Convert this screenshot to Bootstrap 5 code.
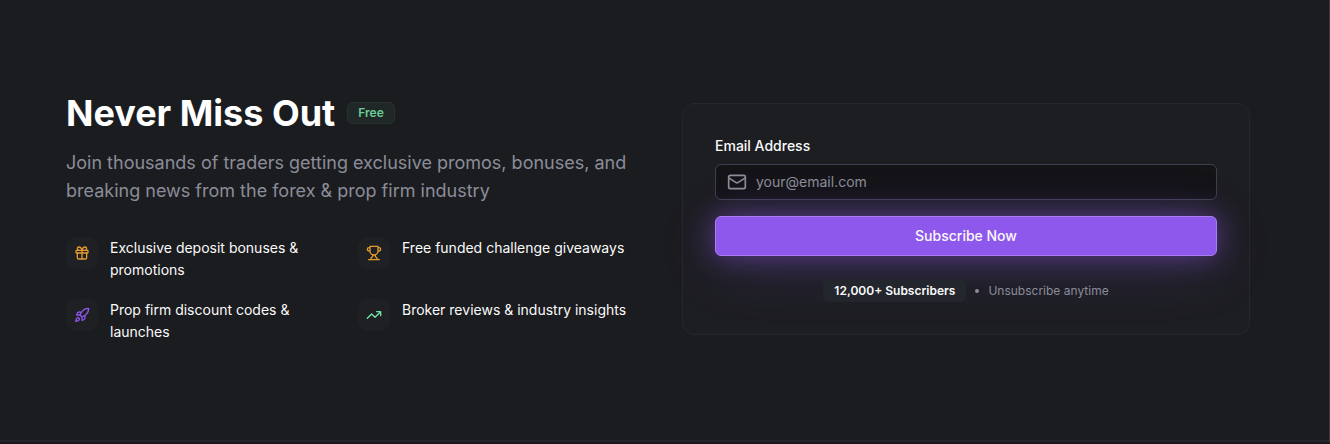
<!DOCTYPE html>
<html lang="en" data-bs-theme="dark">
<head>
<meta charset="utf-8">
<meta name="viewport" content="width=device-width, initial-scale=1">
<title>Never Miss Out</title>
<link href="https://cdn.jsdelivr.net/npm/bootstrap@5.3.0/dist/css/bootstrap.min.css" rel="stylesheet">
<style>
  body { background: #18181b; color: #fafafa; font-family: Inter, "Liberation Sans", sans-serif; font-size: 14px; line-height: 22px; border-right: 1px solid #3a3a3e; }
  .signup { background: #1b1c1f; padding: 93px 13px 95px 0; border-bottom: 2px solid #25262d; }
  .signup-inner { max-width: 1184px; }
  .signup-grid { display: grid; grid-template-columns: 1fr; gap: 48px; }
  .signup-title { font-size: 36px; line-height: 40px; font-weight: 700; }
  .signup-lead { font-size: 18px; line-height: 28px; color: #8b8c99; margin-bottom: 32px; }
  .pill { display: inline-block; font-size: 12px; line-height: 16px; padding: 2px 10px; border: 1px solid transparent; border-radius: 6px; }
  .pill-free { color: #6bcb94; background: #202827; border-color: #27322f; font-weight: 600; }
  .pill-count { color: #fafafa; background: #23262c; font-weight: 600; }
  .feature-grid { display: grid; grid-template-columns: 1fr 1fr; gap: 16px; }
  .feature-grid li { min-height: 46px; }
  .feature-icon { width: 32px; height: 32px; border-radius: 10px; background: #1f2023; }
  .line-icon { fill: none; stroke: currentColor; stroke-width: 2; stroke-linecap: round; stroke-linejoin: round; flex: none; }
  .amber { color: #e59a2f; } .violet { color: #8f57ee; } .mint { color: #72e3a6; }
  .panel { background: #1d1e22; border: 1px solid #26272e; border-radius: 12px; padding: 32px; }
  .panel label { font-weight: 500; line-height: 20px; }
  .email-box { height: 36px; border: 1px solid #3f3f4e; border-radius: 6px; background: #141417; color: #8b8c99; padding: 0 11px; gap: 9px; }
  .email-box input { min-width: 0; font-size: 14px; line-height: 20px; color: #fafafa; outline: 0; }
  .email-box input::placeholder { color: #8b8c99; opacity: 1; }
  .email-box:focus-within { border-color: #8f57ee; }
  .btn-subscribe { --bs-btn-color: #fafafa; --bs-btn-bg: #8e58ec; --bs-btn-border-color: #a97df2; --bs-btn-hover-color: #fff; --bs-btn-hover-bg: #9b69f0; --bs-btn-hover-border-color: #b48df5; height: 40px; font-size: 14px; line-height: 20px; font-weight: 500; border-radius: 6px; box-shadow: 0 0 28px rgba(142, 88, 236, .5), 0 10px 60px rgba(142, 88, 236, .2); }
  .note { font-size: 12px; line-height: 16px; color: #8b8c99; gap: 9px; }
  .dot { width: 4px; height: 4px; border-radius: 50%; background: currentColor; }
  @media (min-width: 992px) { .signup-grid { grid-template-columns: 1fr 1fr; } }
</style>
</head>
<body>
<section class="signup">
  <div class="signup-inner mx-auto">
    <div class="signup-grid align-items-center">
      <div>
        <div class="d-flex align-items-center gap-2 mb-3">
          <h2 class="signup-title mb-0 me-1">Never Miss Out</h2>
          <span class="pill pill-free">Free</span>
        </div>
        <p class="signup-lead">Join thousands of traders getting exclusive promos, bonuses, and breaking news from the forex &amp; prop firm industry</p>
        <ul class="feature-grid list-unstyled mb-0">
          <li class="d-flex align-items-start">
            <span class="feature-icon amber d-flex align-items-center justify-content-center flex-shrink-0 me-2"><svg class="line-icon" width="16" height="16" viewBox="0 0 24 24" aria-hidden="true"><rect x="3" y="8" width="18" height="4" rx="1"/><path d="M12 8v13M19 12v7a2 2 0 0 1-2 2H7a2 2 0 0 1-2-2v-7M7.500 8a2.500 2.500 0 0 1 0-5A4.800 8 0 0 1 12 8a4.800 8 0 0 1 4.500-5 2.500 2.500 0 0 1 0 5"/></svg></span>
            <span class="ms-1">Exclusive deposit bonuses &amp; promotions</span>
          </li>
          <li class="d-flex align-items-start">
            <span class="feature-icon amber d-flex align-items-center justify-content-center flex-shrink-0 me-2"><svg class="line-icon" width="16" height="16" viewBox="0 0 24 24" aria-hidden="true"><path d="M6 9H4.500a2.500 2.500 0 0 1 0-5H6M18 9h1.500a2.500 2.500 0 0 0 0-5H18M4 22h16M10 14.660V17c0 .55-.47.98-.97 1.210C7.850 18.750 7 20.240 7 22M14 14.660V17c0 .55.47.98.97 1.210C16.150 18.750 17 20.240 17 22M18 2H6v7a6 6 0 0 0 12 0V2Z"/></svg></span>
            <span class="ms-1">Free funded challenge giveaways</span>
          </li>
          <li class="d-flex align-items-start">
            <span class="feature-icon violet d-flex align-items-center justify-content-center flex-shrink-0 me-2"><svg class="line-icon" width="16" height="16" viewBox="0 0 24 24" aria-hidden="true"><path d="M4.500 16.500c-1.500 1.260-2 5-2 5s3.740-.5 5-2c.71-.84.7-2.130-.09-2.910a2.180 2.180 0 0 0-2.910-.09zM12 15l-3-3a22 22 0 0 1 2-3.950A12.880 12.880 0 0 1 22 2c0 2.720-.78 7.500-6 11a22.350 22.350 0 0 1-4 2zM9 12H4s.55-3.030 2-4c1.620-1.080 5 0 5 0M12 15v5s3.030-.55 4-2c1.080-1.620 0-5 0-5"/></svg></span>
            <span class="ms-1">Prop firm discount codes &amp; launches</span>
          </li>
          <li class="d-flex align-items-start">
            <span class="feature-icon mint d-flex align-items-center justify-content-center flex-shrink-0 me-2"><svg class="line-icon" width="16" height="16" viewBox="0 0 24 24" aria-hidden="true"><path d="M22 7l-8.500 8.500-5-5L2 17M16 7h6v6"/></svg></span>
            <span class="ms-1">Broker reviews &amp; industry insights</span>
          </li>
        </ul>
      </div>
      <form class="panel" onsubmit="return false">
        <label for="email" class="d-block mb-2">Email Address</label>
        <div class="email-box d-flex align-items-center mb-3">
          <svg class="line-icon" width="20" height="20" viewBox="0 0 24 24" aria-hidden="true"><rect x="2" y="4" width="20" height="16" rx="2"/><path d="M22 7l-8.970 5.700a1.940 1.940 0 0 1-2.060 0L2 7"/></svg>
          <input id="email" type="email" class="flex-grow-1 border-0 bg-transparent p-0" placeholder="your@email.com">
        </div>
        <button type="submit" class="btn btn-subscribe w-100 d-flex align-items-center justify-content-center mb-4">Subscribe Now</button>
        <div class="note d-flex align-items-center justify-content-center">
          <span class="pill pill-count">12,000+ Subscribers</span>
          <span class="dot" aria-hidden="true"></span>
          <span>Unsubscribe anytime</span>
        </div>
      </form>
    </div>
  </div>
</section>
<script src="https://cdn.jsdelivr.net/npm/bootstrap@5.3.0/dist/js/bootstrap.bundle.min.js"></script>
</body>
</html>
